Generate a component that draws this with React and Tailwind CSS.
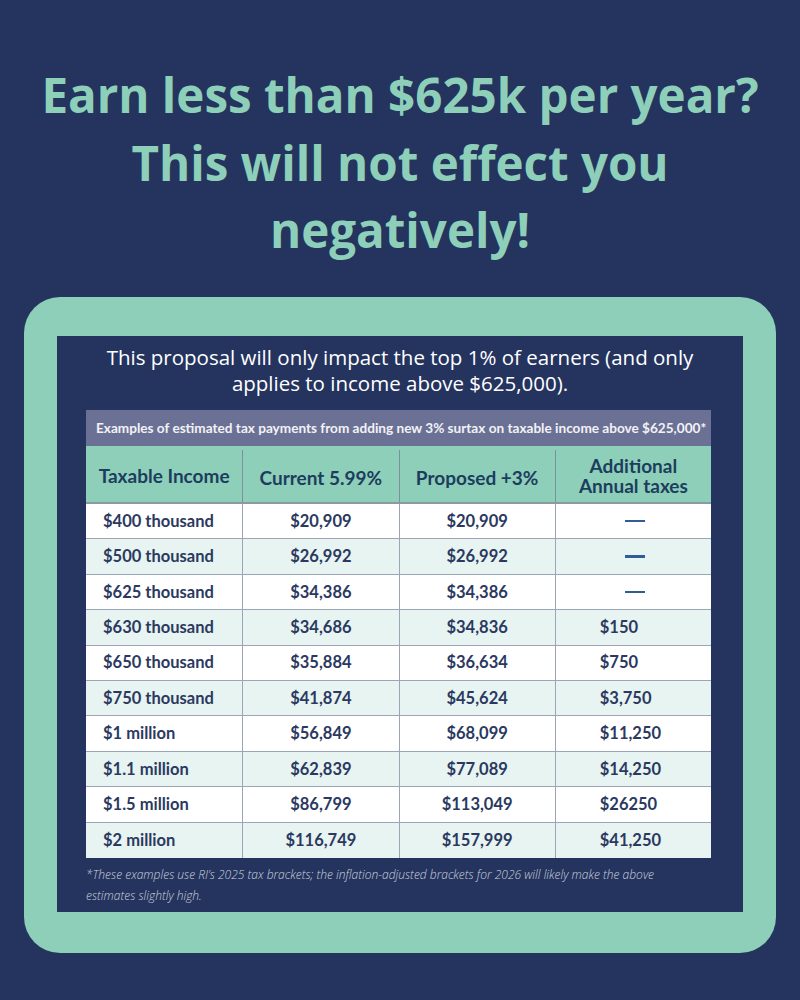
import React from "react";

const rows = [
  ["$400 thousand", "$20,909", "$20,909", null],
  ["$500 thousand", "$26,992", "$26,992", null],
  ["$625 thousand", "$34,386", "$34,386", null],
  ["$630 thousand", "$34,686", "$34,836", "$150"],
  ["$650 thousand", "$35,884", "$36,634", "$750"],
  ["$750 thousand", "$41,874", "$45,624", "$3,750"],
  ["$1 million", "$56,849", "$68,099", "$11,250"],
  ["$1.1 million", "$62,839", "$77,089", "$14,250"],
  ["$1.5 million", "$86,799", "$113,049", "$26250"],
  ["$2 million", "$116,749", "$157,999", "$41,250"],
];

export default function App() {
  return (
    <div className="w-[800px] h-[1000px] bg-[#24345f] flex flex-col items-center overflow-hidden">
      <div className="h-[297px] flex flex-col items-center pt-[61px]">
        <h1
          className="text-[47.5px] leading-[67.5px] font-bold text-[#8dcfb9] text-center whitespace-nowrap"
          style={{ fontFamily: "'Open Sans', sans-serif" }}
        >
          Earn less than $625k per year?
          <br />
          This will not effect you
          <br />
          negatively!
        </h1>
      </div>
      <div className="w-[752px] h-[656px] rounded-[36px] bg-[#8dcfb9] pt-[39px] px-[33px] pb-[41px]">
        <div className="w-[686px] h-[576px] bg-[#24345f] flex flex-col">
          <p
            className="pt-[8px] text-center text-white text-[20.5px] leading-[26px] px-[40px]"
            style={{ fontFamily: "'Open Sans', sans-serif" }}
          >
            This proposal will only impact the top 1% of earners (and only applies to income above $625,000).
          </p>
          <div
            className="mt-[14px] ml-[29px] w-[625px] flex flex-col"
            style={{ fontFamily: "Lato, 'Open Sans', sans-serif" }}
          >
            <div className="h-[36px] bg-[#6b7195] flex items-center pl-[10px] text-[13.6px] font-bold text-[#f2f2f6] whitespace-nowrap">
              Examples of estimated tax payments from adding new 3% surtax on taxable income above $625,000*
            </div>
            <div className="h-[58px] bg-[#8dcfb9] grid grid-cols-4 border-b-2 border-[#8a98a8] text-[#1d3d5e] font-bold text-[19px]">
              <div className="flex items-center justify-center pt-[4px]">Taxable Income</div>
              <div className="flex items-center justify-center pt-[4px] border-l border-[#7f909c] mt-[4px]">Current 5.99%</div>
              <div className="flex items-center justify-center pt-[4px] border-l border-[#7f909c] mt-[4px]">Proposed +3%</div>
              <div className="flex flex-col items-center justify-center text-center leading-[20px] border-l border-[#7f909c] mt-[4px]">
                <span>Additional</span>
                <span>Annual taxes</span>
              </div>
            </div>
            {rows.map((r, i) => (
              <div
                key={i}
                className={`h-[35.4px] grid grid-cols-4 text-[16.5px] font-bold text-[#2b3960] ${
                  i % 2 === 0 ? "bg-white" : "bg-[#e7f4f1]"
                } ${i < rows.length - 1 ? "border-b-[1.5px] border-[#9ba5b8]" : ""}`}
              >
                <div className="flex items-center pl-[17px]">{r[0]}</div>
                <div className="flex items-center justify-center border-l border-[#9ba5b8]">{r[1]}</div>
                <div className="flex items-center justify-center border-l border-[#9ba5b8]">{r[2]}</div>
                <div className="flex items-center border-l border-[#9ba5b8]">
                  {r[3] === null ? (
                    <div className="ml-[69px] w-[20px] h-[2.5px] bg-[#2f5d96]" />
                  ) : (
                    <span className="pl-[44px]">{r[3]}</span>
                  )}
                </div>
              </div>
            ))}
          </div>
          <p
            className="mt-[6px] ml-[29px] text-[12px] leading-[21px] italic font-light text-[#cdd2de]"
            style={{ fontFamily: "'Open Sans', sans-serif" }}
          >
            *These examples use RI’s 2025 tax brackets; the inflation-adjusted brackets for 2026 will likely make the above
            <br />
            estimates slightly high.
          </p>
        </div>
      </div>
    </div>
  );
}
